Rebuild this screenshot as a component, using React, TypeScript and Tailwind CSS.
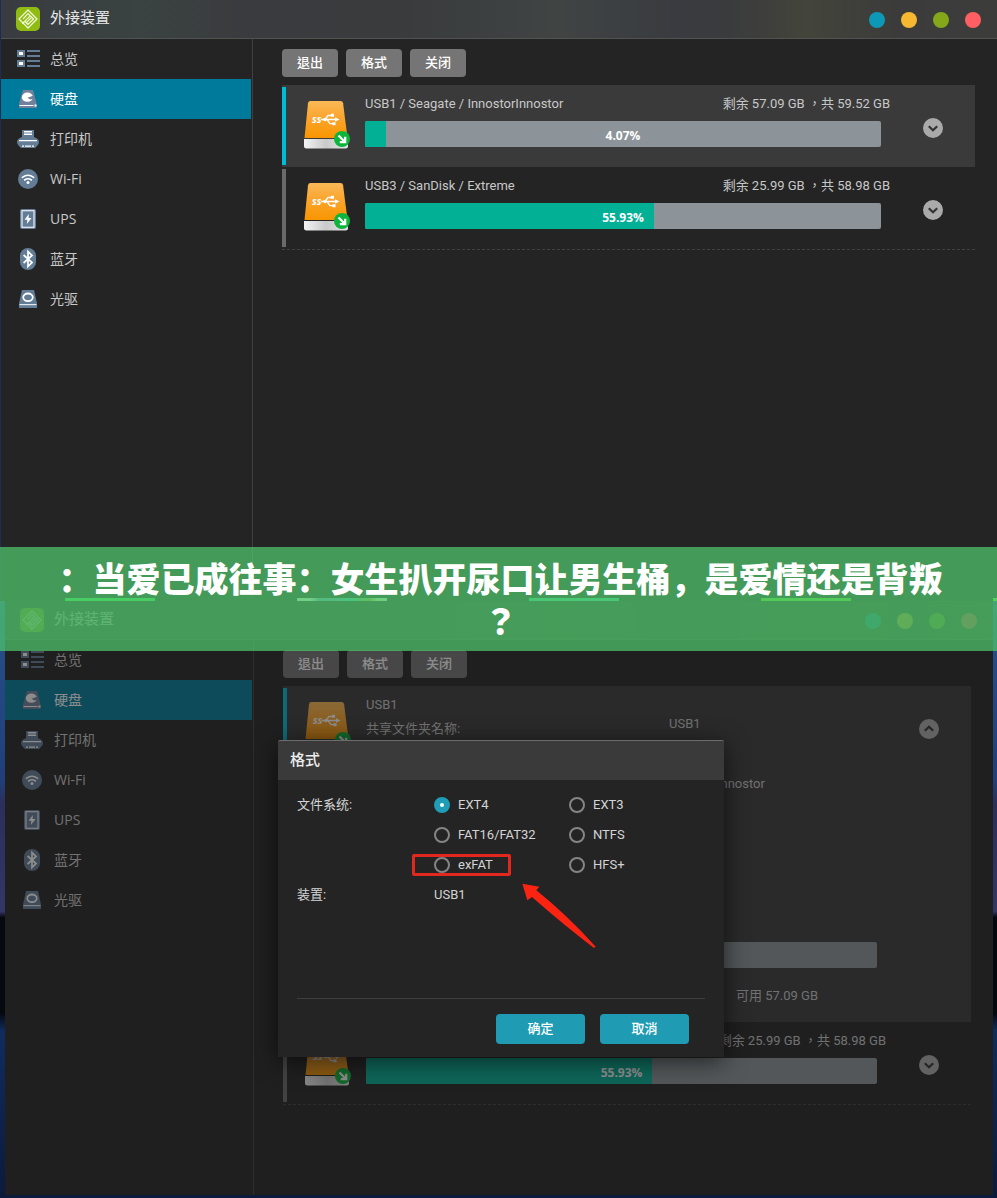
import { useState } from 'react'
import type { ReactNode } from 'react'
import clsx from 'clsx'

const steel = '#647d96'

function LogoIcon() {
  return (
    <svg viewBox="0 0 24 24" className="size-6 shrink-0">
      <rect width="24" height="24" rx="5" fill="#8fbb12" />
      <g fill="none" stroke="#f2f8d8" strokeWidth="1.3" strokeLinejoin="round" strokeLinecap="round">
        <path d="M12 3 21 12 12 21 3 12Z" />
        <path d="M7.4 11.6 12 6.6 17.6 12 12 17.4 9 14.6" />
        <path d="M6.6 16.4 13.4 9.6M10.6 15.400 15 11" />
      </g>
    </svg>
  )
}

const OverviewIcon = () => (
  <svg viewBox="0 0 24 24" className="size-6 shrink-0">
    <path fill={steel} d="M1 3h8v7H1zM1 13h8v7H1zM11 3h13v2H11zM11 8h13v2H11zM11 13h13v2H11zM11 18h13v2H11z" />
    <path fill="#fff" d="M3 5h4v3H3zM3 15h4v3H3z" />
  </svg>
)

const DiskIcon = () => (
  <svg viewBox="0 0 24 24" className="size-6 shrink-0">
    <path fill="#71809c" d="M7 3h10l3.6 13.5V21H3v-4.5z" />
    <ellipse cx="11.4" cy="10.2" rx="5.6" ry="4.6" fill="#fff" />
    <path fill="#71809c" d="M11.5 10.8 17.6 8.6v3.2l-3.4.8z" />
    <path fill="#fff" d="M3.5 18h14v1h-14zM18.5 17.6h2v2h-2z" />
  </svg>
)

const PrinterIcon = () => (
  <svg viewBox="0 0 24 24" className="size-6 shrink-0">
    <path fill={steel} d="M6 3h12v7l3 1.500q2 1 2 3.500t-2 4l-2 2H5l-2-2q-2-1.500-2-4t2-3.500L6 10z" />
    <path fill="#fff" d="M8 4h8v4H8z" />
    <path fill={steel} d="M8 5.500h8v1H8z" />
    <path fill="#fff" d="M3 13h18v1.200H3zM6 18.500h2v1.200H6zM9 18.500h6v1.200H9zM16 18.500h2v1.200h-2z" />
  </svg>
)

const WifiIcon = () => (
  <svg viewBox="0 0 24 24" className="size-6 shrink-0">
    <circle cx="12" cy="12" r="10" fill={steel} />
    <g fill="none" stroke="#fff" strokeWidth="1.600" strokeLinecap="round">
      <path d="M6.400 10.400q5.600-4.400 11.200 0M8.600 13q3.400-2.600 6.800 0" />
    </g>
    <circle cx="12" cy="15.600" r="1.500" fill="#fff" />
  </svg>
)

const UpsIcon = () => (
  <svg viewBox="0 0 24 24" className="size-6 shrink-0">
    <rect x="4" y="2" width="16" height="20" rx="2" fill={steel} />
    <rect x="6" y="3.700" width="12" height="16.600" fill="none" stroke="#e8eef4" strokeWidth="1.200" />
    <path fill="#fff" d="M12.800 7 8.600 12.800h2.800L10.800 17l4.800-6h-3z" />
  </svg>
)

const BluetoothIcon = () => (
  <svg viewBox="0 0 24 24" className="size-6 shrink-0">
    <rect x="4" y="1" width="16" height="22" rx="8" fill={steel} />
    <path fill="none" stroke="#fff" strokeWidth="1.700" d="M7.600 8 16 15.600 12 19.400V4.600l4 3.800L7.600 16" />
  </svg>
)

const OpticalIcon = () => (
  <svg viewBox="0 0 24 24" className="size-6 shrink-0">
    <path fill={steel} d="M6 3h12l3 13.500V21H3v-4.500z" />
    <ellipse cx="12" cy="10.300" rx="4.800" ry="3.800" fill="none" stroke="#fff" strokeWidth="1.800" />
    <path fill="#dfe6ec" d="M3.500 17h17v1.200h-17z" />
  </svg>
)

function UsbDriveIcon() {
  return (
    <svg viewBox="0 0 46 48" className="h-12 w-[46px] shrink-0">
      <defs>
        <linearGradient id="usb-body" x1="0" y1="0" x2="0" y2="1">
          <stop offset="0" stopColor="#f9b957" />
          <stop offset="0.400" stopColor="#fba732" />
          <stop offset="1" stopColor="#f99500" />
        </linearGradient>
        <linearGradient id="usb-base" x1="0" y1="0" x2="1" y2="0">
          <stop offset="0" stopColor="#f4f4f4" />
          <stop offset="0.500" stopColor="#c9c9c9" />
          <stop offset="1" stopColor="#e6e6e6" />
        </linearGradient>
      </defs>
      <path d="M0 38h44v7q0 2.500-2.500 2.500h-39Q0 47.500 0 45z" fill="url(#usb-base)" />
      <path d="M6.500 0h30q2.200 0 2.600 2.200L43.500 37H.5L4 2.200Q4.300 0 6.500 0z" fill="url(#usb-body)" />
      <text x="8" y="22" fontSize="10" fontWeight="700" fontStyle="italic" fontFamily="Open Sans, sans-serif" fill="#fff">ss</text>
      <g fill="none" stroke="#fff" strokeWidth="1.300">
        <path d="M17 18.500h15M21 18.500l3-4h4M23 18.500l3 4.200h3" />
        <circle cx="21" cy="18.500" r="1" fill="#fff" />
      </g>
      <path d="M31 16.200 35.500 18.500 31 20.800zM27 12.800h3v3h-3zM28.500 21.200h3v3h-3z" fill="#fff" />
      <circle cx="38" cy="38" r="8" fill="#0db53c" />
      <path d="M34.500 34.500 41 41M41.200 35.800V41.200H35.800" fill="none" stroke="#fff" strokeWidth="2.200" />
    </svg>
  )
}

const navItems = [
  { label: '总览', icon: <OverviewIcon /> },
  { label: '硬盘', icon: <DiskIcon />, active: true },
  { label: '打印机', icon: <PrinterIcon /> },
  { label: 'Wi-Fi', icon: <WifiIcon /> },
  { label: 'UPS', icon: <UpsIcon /> },
  { label: '蓝牙', icon: <BluetoothIcon /> },
  { label: '光驱', icon: <OpticalIcon /> },
]

const controls = [
  { name: 'help', color: 'bg-[#0e98b8]' },
  { name: 'minimize', color: 'bg-[#f5b830]' },
  { name: 'maximize', color: 'bg-[#84a81a]' },
  { name: 'close', color: 'bg-[#ff5f62]' },
]

const fileSystems = ['EXT4', 'EXT3', 'FAT16/FAT32', 'NTFS', 'exFAT', 'HFS+']

function Toggle({ open }: { open?: boolean }) {
  return (
    <button type="button" aria-label="toggle details" aria-expanded={!!open} className="mt-[33px] mr-8 ml-[42px] grid size-5 shrink-0 place-items-center rounded-full bg-[#aaaaaa]">
      <svg viewBox="0 0 20 20" className={clsx('size-5', open && 'rotate-180')}>
        <path d="M5.800 8.200 10 12.200l4.200-4" fill="none" stroke="#333" strokeWidth="2.200" />
      </svg>
    </button>
  )
}

function UsageBar({ percent, hideValue }: { percent: number; hideValue?: boolean }) {
  return (
    <div role="progressbar" aria-valuenow={percent} className="relative h-[26px] overflow-hidden rounded-xs bg-[#8c9499]">
      <div className="h-full bg-[#02b096]" style={{ width: `${percent}%` }} />
      {!hideValue && (
        <span className="absolute inset-0 pt-px text-center font-['Open_Sans',sans-serif] text-[12px] leading-[28px] font-bold text-white">{percent}%</span>
      )}
    </div>
  )
}

function DeviceRow({ selected, open, children }: { selected?: boolean; open?: boolean; children: ReactNode }) {
  return (
    <li className={clsx('flex', selected ? 'bg-[#3a3a3a]' : 'border-b border-dashed border-[#414141]')}>
      <span className={clsx('my-0.5 w-1 shrink-0', selected ? 'bg-[#00bcd4]' : 'bg-[#6a6a6a]')} />
      <div className="mt-4 mr-[15px] ml-[18px]">
        <UsbDriveIcon />
      </div>
      <div className="min-w-0 flex-1 pt-[9px]">{children}</div>
      <Toggle open={open} />
    </li>
  )
}

function DeviceSummary({ name, free, total, percent }: { name: string; free: string; total: string; percent: number }) {
  return (
    <div className="pb-5">
      <div className="-mr-[9px] mb-[7px] flex justify-between whitespace-nowrap">
        <span>{name}</span>
        <span>剩余 {free} GB ，共 {total} GB</span>
      </div>
      <UsageBar percent={percent} />
    </div>
  )
}

function DeviceDetails() {
  return (
    <div className="pb-4">
      <div className="flex">
        <div className="w-[303px] shrink-0">
          <p>USB1</p>
          <p className="mt-1">共享文件夹名称:</p>
        </div>
        <div className="pt-[19px]">
          <p>USB1</p>
          <p className="mt-10">InnostorInnostor</p>
        </div>
      </div>
      <div className="mt-[148px] mb-[18px]">
        <UsageBar percent={4.07} hideValue />
      </div>
      <p className="pl-[370px]">可用 57.09 GB</p>
    </div>
  )
}

function AppWindow({ sidebarClass, children, overlay }: { sidebarClass: string; children: ReactNode; overlay?: ReactNode }) {
  return (
    <section className="relative flex flex-1 flex-col bg-[#242424] text-[#c8c8c8]">
      <header className="flex h-[39px] shrink-0 items-center border-b border-[#505450] bg-[linear-gradient(90deg,#393b40_0%,#3a4341_14%,#3a3b3e_24%,#393b3d_40%,#404443_56%,#393b40_68%,#3a3b3d_73%,#43443a_81%,#3b3b3b_90%,#3c3d3b_100%)] pr-4 pl-[15px]">
        <LogoIcon />
        <h1 className="ml-[10px] pb-0.5 text-[15px] text-[#e6e6e6]">外接装置</h1>
        <div className="ml-auto flex gap-4">
          {controls.map(c => (
            <button key={c.name} type="button" aria-label={c.name} className={clsx('mt-0.5 size-4 rounded-full', c.color)} />
          ))}
        </div>
      </header>
      <div className="flex flex-1">
        <nav className={clsx('shrink-0 border-r border-[#404040] pr-px', sidebarClass)}>
          {navItems.map(item => (
            <a key={item.label} href="#" className={clsx("flex h-10 items-center gap-[10px] pl-[15px] font-['Open_Sans','Noto_Sans_CJK_SC',sans-serif] text-[14px]", item.active && 'bg-[#007a9a] text-white')}>
              {item.icon}
              <span className="pb-0.5">{item.label}</span>
            </a>
          ))}
        </nav>
        <main className="min-w-0 flex-1 pt-[10px] pr-[22px] pl-[29px] text-[13px] leading-5">
          <div className="mb-2 flex gap-2">
            {['退出', '格式', '关闭'].map(t => (
              <button key={t} type="button" className="h-7 w-14 rounded-sm bg-[#757575] font-medium text-white">{t}</button>
            ))}
          </div>
          <ul>{children}</ul>
        </main>
      </div>
      {overlay}
    </section>
  )
}

function FormatDialog() {
  const [fs, setFs] = useState('EXT4')

  return (
    <div className="absolute inset-0 flex items-center justify-center bg-[#1a1a1a]/50 pl-1">
      <form role="dialog" aria-label="格式" onSubmit={e => e.preventDefault()} className="relative w-[446px] rounded-t-xs bg-[#242424] text-[13px] leading-[30px] text-[#d4d4d4] shadow-[0_4px_24px_rgba(0,0,0,0.6)]">
        <h2 className="rounded-t-xs border-t border-[#6c6c6c] bg-[#3a3a3a] px-3 text-[15px] leading-[39px] font-medium text-[#ededed]">格式</h2>
        <div className="px-[19px] pt-[10px]">
          <fieldset className="flex">
            <legend className="float-left w-[137px]">文件系统:</legend>
            <div className="grid flex-1 grid-cols-[135px_135px]">
              {fileSystems.map(f => (
                <label key={f} className="flex items-center gap-2">
                  <input
                    type="radio"
                    name="fs"
                    value={f}
                    checked={fs === f}
                    onChange={() => setFs(f)}
                    className="size-4 appearance-none rounded-full border-2 border-[#858585] checked:border-[6px] checked:border-[#1f9db6] checked:bg-white"
                  />
                  {f}
                </label>
              ))}
            </div>
          </fieldset>
          <div className="flex">
            <span className="w-[137px]">装置:</span>
            <span>USB1</span>
          </div>
          <div className="mt-[88px] flex justify-end gap-[15px] border-t border-[#3e3e3e] pt-[15px] pr-4 pb-[13px]">
            <button type="submit" className="w-[89px] rounded-sm bg-[#1f9cb3] font-medium text-white">确定</button>
            <button type="button" className="w-[89px] rounded-sm bg-[#1f9cb3] font-medium text-white">取消</button>
          </div>
        </div>
        {/* callout around the exFAT option */}
        <div className="absolute top-[114px] left-[134px] h-[22px] w-[99px] rounded-xs border-[3px] border-[#e2281e]" />
        <svg viewBox="756 130 222 198" className="absolute top-[143px] left-[244px] h-[66px] w-[74px]">
          <path d="M757 132 808 141 799 152Q890 225 977 321L972 325Q880 255 786 172L772 182Z" fill="#fb2312" />
        </svg>
      </form>
    </div>
  )
}

export default function App() {
  return (
    <div className="flex min-h-screen flex-col bg-[#0c1430] font-['Roboto','Noto_Sans_CJK_TC',sans-serif]">
      <div className="flex min-h-[598px] flex-col bg-[#1c2c52] pl-px">
        <AppWindow sidebarClass="w-[252px]">
          <DeviceRow selected>
            <DeviceSummary name="USB1 / Seagate / InnostorInnostor" free="57.09" total="59.52" percent={4.07} />
          </DeviceRow>
          <DeviceRow>
            <DeviceSummary name="USB3 / SanDisk / Extreme" free="25.99" total="58.98" percent={55.93} />
          </DeviceRow>
        </AppWindow>
      </div>
      <div className="flex h-[3px] gap-[142px] overflow-hidden bg-[#242424] pl-[65px]">
        <span className="w-[90px] shrink-0 bg-[#35d650]" />
        <span className="w-[90px] shrink-0 bg-[linear-gradient(90deg,#c8e0c8_0_15%,#5a9ab0_25%_45%,#30c0b0_60%,#90a040_80%,#c0e0b0_90%)]" />
        <span className="w-[90px] shrink-0 bg-[#34c88a]" />
        <span className="w-[90px] shrink-0 bg-[#56d02c]" />
        <span className="w-[90px] shrink-0 bg-[#6ae03c]" />
      </div>
      <div className="relative flex flex-1 flex-col bg-[linear-gradient(180deg,#27508c_0%,#203f7a_30%,#2b2f5c_34%,#343666_52%,#05080f_53%,#05080f_69%,#0f2c5e_72%,#0c1a3c_100%)] pr-1 pb-[3px] pl-[5px]">
        <AppWindow sidebarClass="w-[249px]" overlay={<FormatDialog />}>
          <DeviceRow selected open>
            <DeviceDetails />
          </DeviceRow>
          <DeviceRow>
            <DeviceSummary name="USB3 / SanDisk / Extreme" free="25.99" total="58.98" percent={55.93} />
          </DeviceRow>
        </AppWindow>
        <p className="absolute inset-x-0 -top-[54px] bg-[#50c86c]/72 py-[10px] pl-1 text-center font-['Noto_Sans_CJK_SC',sans-serif] text-[34px] leading-[42px] font-black text-white">
          ：当爱已成往事：女生扒开尿口让男生桶，是爱情还是背叛
          <br />
          <span className="font-['Noto_Sans_CJK_TC',sans-serif]">？</span>
        </p>
      </div>
    </div>
  )
}
